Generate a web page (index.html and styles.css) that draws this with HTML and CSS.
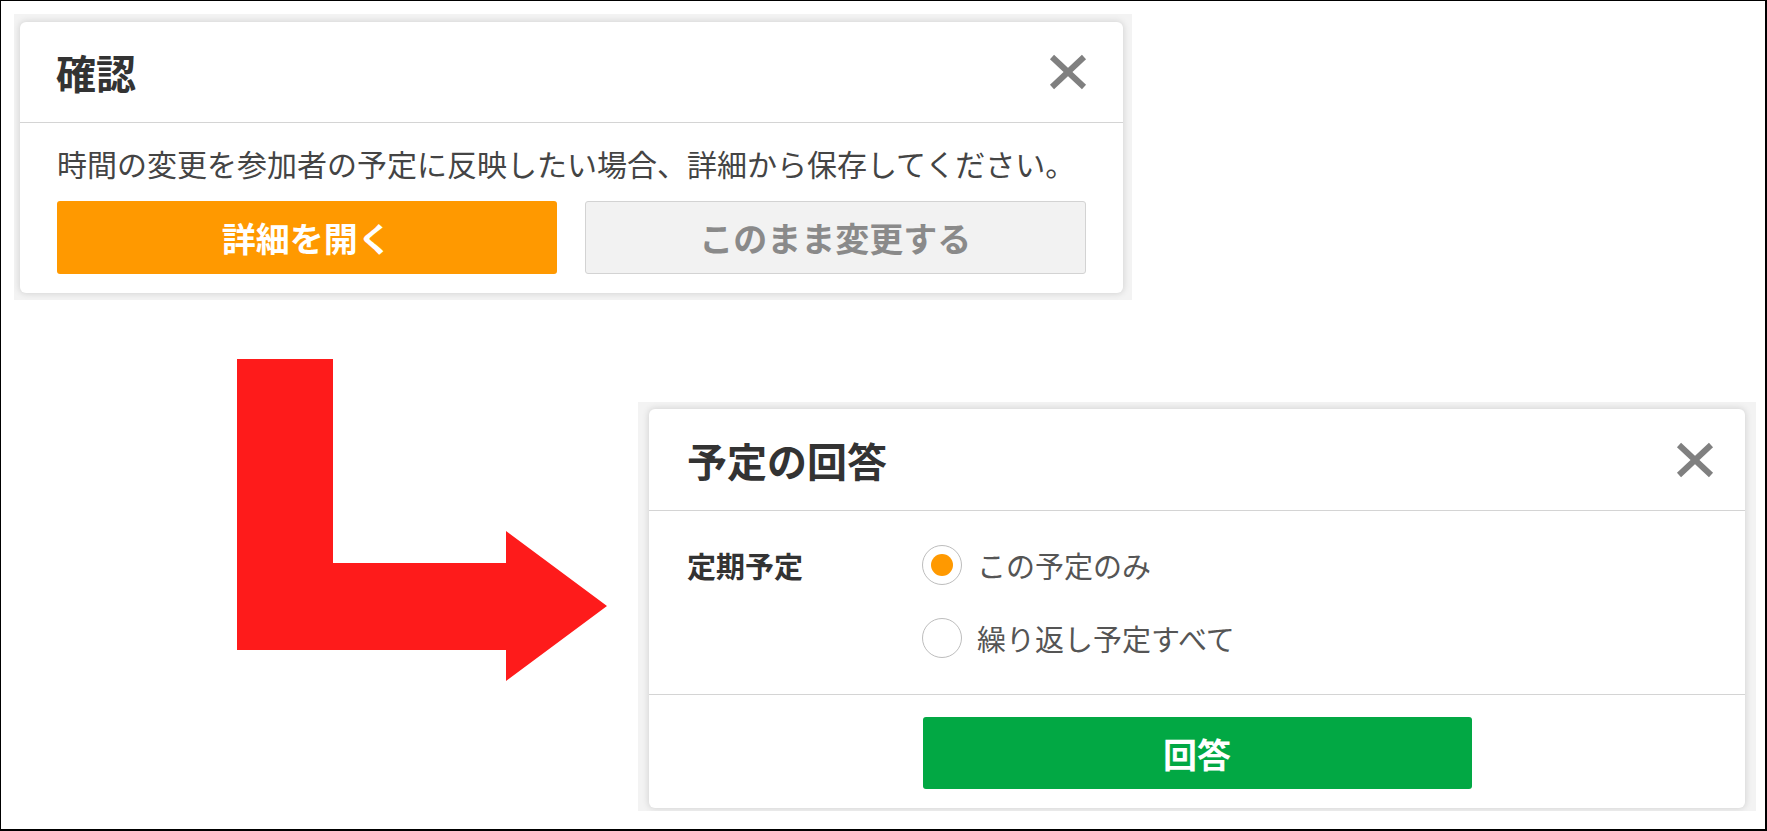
FILE: index.html
```html
<!DOCTYPE html>
<html lang="ja">
<head>
    <meta charset="UTF-8">
    <meta name="viewport" content="width=device-width, initial-scale=1.0">
    <title>予定の変更</title>
    <link rel="stylesheet" href="styles.css">
</head>
<body>

<div class="canvas">

    <!-- step 1: confirm dialog -->
    <div class="shot shot-confirm">
        <div class="dialog dialog-confirm">
            <div class="dialog-header">
                <h2 class="dialog-title">確認</h2>
                <span class="close-btn">
                    <svg width="38" height="36" viewBox="0 0 38 36"><path d="M3 3 L35 33 M35 3 L3 33" stroke="#808080" stroke-width="6" fill="none"/></svg>
                </span>
            </div>
            <div class="confirm-body">
                <p class="confirm-text">時間の変更を参加者の予定に反映したい場合、詳細から保存してください。</p>
                <div class="btn-row">
                    <button class="btn btn-orange">詳細を開く</button>
                    <button class="btn btn-gray">このまま変更する</button>
                </div>
            </div>
        </div>
    </div>

    <div class="step-row">
        <!-- arrow pointing to the next dialog -->
        <svg class="step-arrow" width="371" height="323" viewBox="0 0 371 323">
            <polygon points="0,0 96,0 96,204 269,204 269,172 370,247 269,322 269,291 0,291" fill="#fe1b1b"/>
        </svg>

        <!-- step 2: answer dialog -->
        <div class="shot shot-answer">
            <div class="dialog dialog-answer">
                <div class="dialog-header">
                    <h2 class="dialog-title">予定の回答</h2>
                    <span class="close-btn">
                        <svg width="38" height="36" viewBox="0 0 38 36"><path d="M3 3 L35 33 M35 3 L3 33" stroke="#808080" stroke-width="6" fill="none"/></svg>
                    </span>
                </div>
                <div class="answer-body">
                    <div class="field-label">定期予定</div>
                    <div class="options">
                        <label class="option"><input type="radio" name="scope" checked><span>この予定のみ</span></label>
                        <label class="option"><input type="radio" name="scope"><span>繰り返し予定すべて</span></label>
                    </div>
                </div>
                <div class="answer-footer">
                    <button class="btn btn-green">回答</button>
                </div>
            </div>
        </div>
    </div>

</div>

</body>
</html>
```

FILE: styles.css
```css
* {
    margin: 0;
    padding: 0;
    box-sizing: border-box;
}

html, body {
    width: 100%;
    height: 100%;
    overflow: hidden;
    background: #fff;
    font-family: "Noto Sans CJK JP", "Noto Sans", sans-serif;
    color: #333;
}

.canvas {
    width: 1767px;
    height: 831px;
    border-style: solid;
    border-color: #000;
    border-width: 1px 2px 2px 1px;
    overflow: hidden;
}

/* cropped screenshot with the dialog shadow around it */
.shot {
    background: #f3f3f3;
    overflow: hidden;
}

.shot-confirm {
    width: 1118px;
    margin: 13px 0 0 13px;
    padding: 8px 9px 7px 6px;
}

.shot-answer {
    width: 1118px;
    margin: 102px 0 0 30px;
    padding: 7px 11px 3px 11px;
}

.dialog {
    background: #fff;
    border-radius: 6px;
    box-shadow: 0 0 6px 1px rgba(0, 0, 0, 0.12);
}

.dialog-header {
    display: flex;
    align-items: center;
    justify-content: space-between;
    border-bottom: 1px solid #d4d4d4;
}

.dialog-title {
    font-size: 40px;
    font-weight: bold;
    color: #333;
    line-height: 1;
}

.close-btn {
    display: flex;
    cursor: pointer;
}

/* confirm dialog */
.dialog-confirm .dialog-header {
    height: 101px;
    padding: 0 36px 0 36px;
}

.confirm-body {
    padding: 22px 37px 19px 37px;
}

.confirm-text {
    font-size: 30px;
    line-height: 36px;
    color: #444;
    white-space: nowrap;
}

.btn-row {
    display: flex;
    gap: 28px;
    margin-top: 20px;
}

.btn {
    font-family: inherit;
    font-weight: bold;
    border: none;
    border-radius: 3px;
    cursor: pointer;
}

.btn-row .btn {
    flex: 1;
    height: 73px;
    font-size: 34px;
}

.btn-orange {
    background: #ff9900;
    color: #fff;
}

.btn-gray {
    background: #f2f2f2;
    color: #8a8a8a;
    border: 1px solid #d3d3d3;
}

/* answer dialog */
.dialog-answer .dialog-header {
    height: 102px;
    padding: 0 31px 0 38px;
}

.answer-body {
    display: flex;
    padding: 34px 38px 36px 38px;
    border-bottom: 1px solid #d4d4d4;
}

.field-label {
    width: 235px;
    font-size: 29px;
    font-weight: bold;
    line-height: 40px;
    color: #333;
}

.options {
    display: flex;
    flex-direction: column;
    gap: 33px;
}

.option {
    display: flex;
    align-items: center;
    gap: 15px;
    font-size: 29px;
    line-height: 40px;
    color: #555;
    cursor: pointer;
}

.option input {
    appearance: none;
    width: 40px;
    height: 40px;
    border: 1.5px solid #bdbdbd;
    border-radius: 50%;
    background: #fff;
    display: flex;
    align-items: center;
    justify-content: center;
    margin: 0;
}

.option input:checked::after {
    content: "";
    width: 22px;
    height: 22px;
    border-radius: 50%;
    background: #ff9900;
}

.answer-footer {
    display: flex;
    justify-content: center;
    padding: 22px 0 19px 0;
}

.btn-green {
    width: 549px;
    height: 72px;
    font-size: 34px;
    background: #02a844;
    color: #fff;
}

.step-row {
    display: flex;
    align-items: flex-start;
}

.step-arrow {
    flex: none;
    margin: 59px 0 0 236px;
}
```
